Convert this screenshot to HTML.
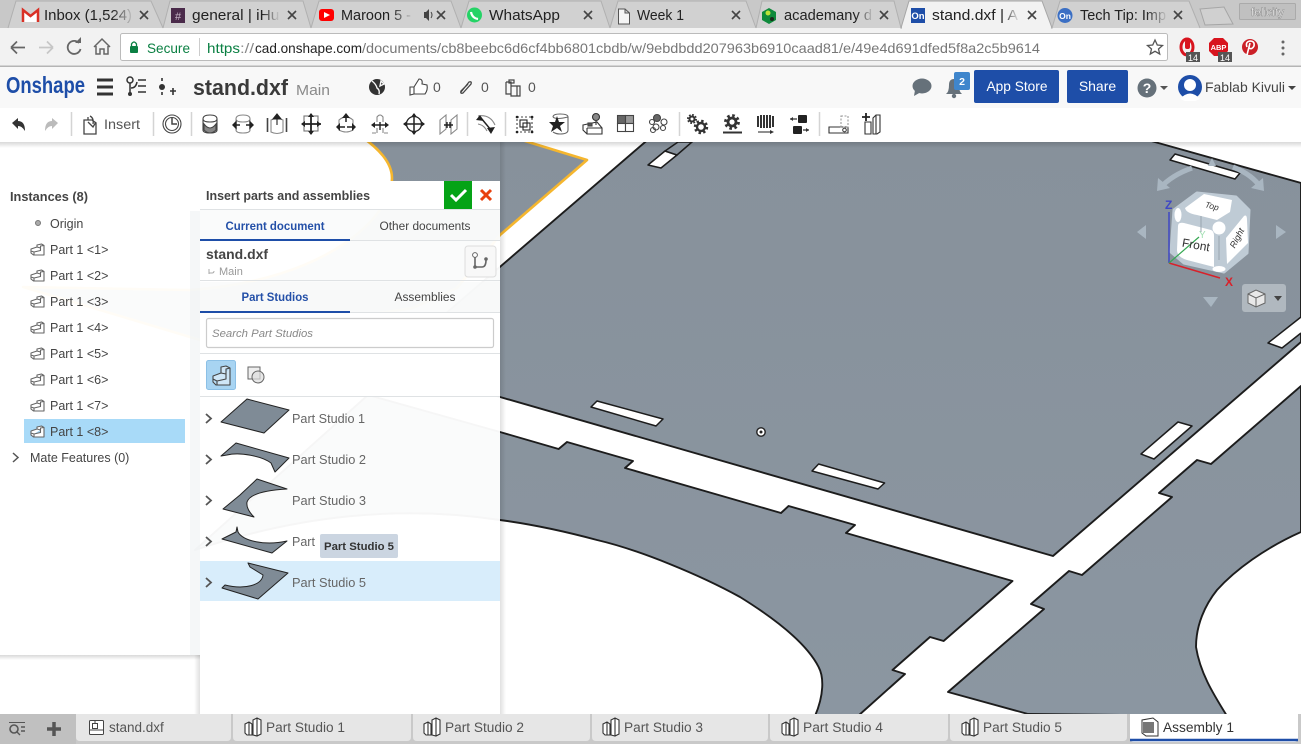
<!DOCTYPE html>
<html><head><meta charset="utf-8"><style>
html,body{margin:0;padding:0;width:1301px;height:744px;overflow:hidden;background:#fff}
svg{display:block;font-family:"Liberation Sans",sans-serif}
.tb{font-size:14.5px;fill:#222}
.ps{font-size:12.5px;fill:#666}
.inst{font-size:12.5px;fill:#444}
.btab{font-size:13.5px;fill:#555}
.pl{fill:url(#g);stroke:#1c1c1c;stroke-width:1.9;stroke-linejoin:round}
.slot{fill:#fff;stroke:#1c1c1c;stroke-width:1.5;stroke-linejoin:round}
.th{fill:#7f8b96;stroke:#222;stroke-width:1;stroke-linejoin:round}
.tab{fill:#d1d1d1;stroke:#b0b0b0;stroke-width:1}
.x{stroke:#444;stroke-width:1.6;fill:none}
.bt{fill:#e6e6e6}
</style></head><body>
<svg width="1301" height="744" viewBox="0 0 1301 744" xmlns="http://www.w3.org/2000/svg">
<defs>
<linearGradient id="g" gradientUnits="userSpaceOnUse" x1="0" y1="142" x2="0" y2="714"><stop offset="0" stop-color="#87919b"/><stop offset="1" stop-color="#8b96a1"/></linearGradient>
<linearGradient id="sh" x1="0" y1="0" x2="0" y2="1"><stop offset="0" stop-color="#000" stop-opacity=".15"/><stop offset="1" stop-color="#000" stop-opacity="0"/></linearGradient>
<linearGradient id="shx" x1="0" y1="0" x2="1" y2="0"><stop offset="0" stop-color="#000" stop-opacity=".12"/><stop offset="1" stop-color="#000" stop-opacity="0"/></linearGradient>
<linearGradient id="fd" x1="0" y1="0" x2="1" y2="0"><stop offset="0" stop-color="#d1d1d1" stop-opacity="0"/><stop offset="1" stop-color="#d1d1d1"/></linearGradient>
<linearGradient id="fa" x1="0" y1="0" x2="1" y2="0"><stop offset="0" stop-color="#f2f2f2" stop-opacity="0"/><stop offset="1" stop-color="#f2f2f2"/></linearGradient>
<g id="part"><path d="M-6.5,0 L-0.500,-2 L-0.500,-4 L4,-5 L6.500,-3.500 L6.500,6 L-4,6 L-6.500,4 Z M-6.500,2 L-3.500,3 L-3.500,6 M-3.500,3 L3,1.500 L3,-3 L6.500,-3.500 M-0.500,-2 L3,-1" fill="#fff" stroke="#666" stroke-width="1.100" stroke-linejoin="round"/></g>
<g id="ps"><path d="M-9,-3 L-5,-5 L-2,-3 L-2,8 L-7,8 L-9,6 Z M-5,-5 L-5,8 M-1,-7 L3,-9 L7,-7 L7,7 L3,9 L-1,8 Z M3,-9 L3,9" fill="#fff" stroke="#333" stroke-width="1.1"/></g>
</defs>

<!-- 3D viewport -->
<rect x="0" y="142" width="1301" height="572" fill="#fff"/>
<path d="M362,137 Q392,158 392,178 C392,215 330,280 190,290 L23,287 L200,340 L413,308 L457,288 L500,235 L587,160 L512,137 Z" fill="url(#g)" stroke="#f5b62e" stroke-width="2.600" stroke-linejoin="round"/>
<path class="pl" d="M651,137 L1137,137 L1301,183 L1301,342 L1053,556 L500,397 L387,364 Z"/>
<path class="pl" d="M368,395 L500,432 L558.6,449 L567,442 L633,461 L625,468 L781,513 L788.6,506 L855,525 L846,533 L1012.5,581 L943.6,641 L930,637 L892.5,670 L905,674 L858,716 L815,716 C824,695 824,677 818.6,667 C810,650 790,628 740,597 C700,575 640,550 597,540 C560,530 530,524 500,520 C400,505 300,515 195,550 Z"/>
<path class="pl" d="M1301,386 L1211,464 L1197,460 L1159,493 L1172,497 L1082,575 L1069,571 L1031,604 L1044,609 L948,692 L1028,714 L1227,716 C1212,692 1200,672 1196,647 C1196,625 1205,605 1217,590 C1235,570 1265,548 1301,532 Z"/>
<rect x="0" y="142" width="1301" height="6" fill="url(#sh)"/>
<path class="slot" d="M1175,154 L1240,173 L1235,179 L1170,160 Z"/>
<path class="slot" d="M597,401 L663,419 L656,426 L591,407 Z"/>
<path class="slot" d="M818.6,464 L884.6,483 L878,489 L812,471 Z"/>
<path class="slot" d="M1178,422 L1192,426 L1154,459 L1141,454 Z"/>
<path class="slot" d="M1301,317 L1268,343 L1282,348 L1301,333"/>
<path class="slot" d="M665,151 L677,155 L661,168 L648,165 Z"/>
<path d="M678,142 L692,142 L677,155 L665,151 Z" fill="#87919b" stroke="#1c1c1c" stroke-width="1.5"/>
<circle cx="761" cy="432" r="4.2" fill="#fff" stroke="#222" stroke-width="1.4"/><circle cx="761" cy="432" r="1.5" fill="#222"/>

<!-- View cube -->
<g>
<path d="M1160,188 Q1172,175 1192,168" fill="none" stroke="#a9b6c1" stroke-width="5"/><path d="M1157,191 L1158,178 L1170,188 Z" fill="#a9b6c1"/>
<path d="M1233,167 Q1253,175 1261,188" fill="none" stroke="#a9b6c1" stroke-width="5"/><path d="M1264,191 L1263,178 L1251,188 Z" fill="#a9b6c1"/>
<path d="M1208,166 L1212,158 L1216,166 Z" fill="#a9b6c1"/>
<path d="M1137,232 L1146,225 L1146,239 Z" fill="#a9b6c1"/><path d="M1286,232 L1276,225 L1276,239 Z" fill="#a9b6c1"/><path d="M1203,297 L1218,297 L1211,307 Z" fill="#a9b6c1"/>
<path d="M1174,210 L1197,193 L1236,197 L1249,210 L1247,253 L1224,272 L1184,263 L1171,252 Z" fill="#bfcbd5" stroke="#bfcbd5" stroke-width="3" stroke-linejoin="round"/>
<path d="M1185,208 L1204,194 L1232,200 L1230,212 L1217,220 L1197,215 Q1186,213 1185,208 Z" fill="#fff"/>
<path d="M1178,226 Q1178,222 1184,223 L1211,230 Q1214,231 1214,236 L1214,267 L1187,260 Q1177,257 1177,250 Z" fill="#fff"/>
<path d="M1226,238 L1244,216 Q1247,214 1247,220 L1248,243 L1227,264 Z" fill="#fff"/>
<circle cx="1219" cy="228" r="6.5" fill="#fff"/><ellipse cx="1178" cy="215" rx="3.5" ry="7" fill="#fff"/><ellipse cx="1219" cy="269" rx="6.5" ry="3" fill="#fff"/>
<path d="M1201,216 L1201,232 M1219,236 L1219,260" stroke="#9aa6b0" stroke-width="1"/>
<path d="M1169,263 L1169,212" stroke="#3f47c4" stroke-width="1.5"/><path d="M1169,263 L1220,278" stroke="#d8212a" stroke-width="1.5"/><path d="M1169,263 L1199,237" stroke="#35a852" stroke-width="1.2"/>
<text x="1196" y="249" font-size="12" fill="#333" transform="rotate(10 1196 245)" text-anchor="middle">Front</text>
<text x="1212" y="209" font-size="8.5" font-style="italic" fill="#333" transform="rotate(15 1212 206)" text-anchor="middle">Top</text>
<text x="1237" y="241" font-size="9" font-style="italic" fill="#333" transform="rotate(-62 1237 238)" text-anchor="middle">Right</text>
<text x="1165" y="209" font-size="12" font-weight="bold" fill="#3f47c4">Z</text>
<text x="1225" y="286" font-size="12" font-weight="bold" fill="#d8212a">X</text>
<text x="1199" y="238" font-size="10" fill="#a4e0b4">Y</text>
<rect x="1242" y="284" width="44" height="28" rx="3" fill="#b0b8bf"/>
<path d="M1248,294 L1256,290 L1265,294 L1265,303 L1256,307 L1248,303 Z" fill="#e8e8e8" stroke="#666"/><path d="M1248,294 L1256,298 L1265,294 M1256,298 L1256,307" fill="none" stroke="#666"/>
<path d="M1274,296 L1282,296 L1278,301 Z" fill="#444"/>
</g>

<!-- Left panel -->
<rect x="0" y="180" width="200" height="475" fill="#fff" fill-opacity=".96"/>
<rect x="190" y="211" width="10" height="444" fill="#eef1f3" fill-opacity=".6"/>
<rect x="0" y="655" width="200" height="5" fill="url(#sh)"/>
<text x="10" y="201" font-size="12.5" font-weight="bold" fill="#444" textLength="78" lengthAdjust="spacingAndGlyphs">Instances (8)</text>
<circle cx="38" cy="223" r="2.5" fill="#aaa" stroke="#777"/>
<text x="50" y="228" class="inst">Origin</text>
<rect x="24" y="419" width="161" height="24" fill="#a8daf8"/>
<use href="#part" x="37.500" y="249"/><text x="50" y="254" class="inst">Part 1 &lt;1&gt;</text>
<use href="#part" x="37.500" y="275"/><text x="50" y="280" class="inst">Part 1 &lt;2&gt;</text>
<use href="#part" x="37.500" y="301"/><text x="50" y="306" class="inst">Part 1 &lt;3&gt;</text>
<use href="#part" x="37.500" y="327"/><text x="50" y="332" class="inst">Part 1 &lt;4&gt;</text>
<use href="#part" x="37.500" y="353"/><text x="50" y="358" class="inst">Part 1 &lt;5&gt;</text>
<use href="#part" x="37.500" y="379"/><text x="50" y="384" class="inst">Part 1 &lt;6&gt;</text>
<use href="#part" x="37.500" y="405"/><text x="50" y="410" class="inst">Part 1 &lt;7&gt;</text>
<use href="#part" x="37.500" y="431"/><text x="50" y="436" class="inst">Part 1 &lt;8&gt;</text>
<path d="M13,453 L18,457.500 L13,462" fill="none" stroke="#555" stroke-width="1.5"/>
<text x="30" y="462" class="inst">Mate Features (0)</text>

<!-- Insert panel -->
<rect x="194" y="655" width="6" height="59" fill="url(#shx)" transform="matrix(-1 0 0 1 394 0)"/>
<rect x="500" y="142" width="6" height="572" fill="url(#shx)"/>
<rect x="200" y="181" width="300" height="533" fill="#fff" fill-opacity=".96"/>
<rect x="200" y="181" width="244" height="28" fill="#fff"/>
<rect x="350" y="181" width="150" height="28" fill="#fff"/>
<rect x="200" y="313" width="300" height="84" fill="#fff"/>
<rect x="444" y="181" width="28" height="28" fill="#05a316"/>
<path d="M451,195 L456,200 L466,190" fill="none" stroke="#fff" stroke-width="3"/>
<path d="M481,190 L491,200 M491,190 L481,200" stroke="#e8410e" stroke-width="3"/>
<text x="206" y="200" font-size="12.5" font-weight="bold" fill="#444" textLength="164" lengthAdjust="spacingAndGlyphs">Insert parts and assemblies</text>
<path d="M200,209.500 H500 M200,240.500 H500 M200,280.500 H500 M200,312.500 H500 M200,353.500 H500 M200,396.500 H500" stroke="#dfe2e4" stroke-width="1"/>
<rect x="200" y="210" width="300" height="30" fill="#f7f8f8" fill-opacity=".6"/>
<rect x="200" y="282" width="300" height="30" fill="#f7f8f8" fill-opacity=".6"/>
<text x="275" y="230" font-size="11.5" font-weight="bold" fill="#2450a8" text-anchor="middle" textLength="99" lengthAdjust="spacingAndGlyphs">Current document</text>
<text x="425" y="230" font-size="11.5" fill="#444" text-anchor="middle" textLength="91" lengthAdjust="spacingAndGlyphs">Other documents</text>
<rect x="200" y="239" width="150" height="2" fill="#1e4ea8"/>
<text x="206" y="259" font-size="14" font-weight="bold" fill="#444" textLength="62" lengthAdjust="spacingAndGlyphs">stand.dxf</text>
<path d="M209,269 v5 M209,273 h3 q2,0 2,-2" fill="none" stroke="#aaa"/><text x="219" y="275" font-size="11" fill="#999">Main</text>
<rect x="465" y="246" width="31" height="31" rx="3" fill="#f8f8f8" stroke="#ddd"/>
<circle cx="475" cy="255" r="2.4" fill="#fff" stroke="#666"/><path d="M475,257 V267 H482 Q486,267 486,260" fill="none" stroke="#666" stroke-width="1.6"/><circle cx="475" cy="267" r="1.8" fill="#666"/><circle cx="486" cy="259" r="1.8" fill="#666"/>
<text x="275" y="301" font-size="11.5" font-weight="bold" fill="#2450a8" text-anchor="middle" textLength="67" lengthAdjust="spacingAndGlyphs">Part Studios</text>
<text x="425" y="301" font-size="11.5" fill="#444" text-anchor="middle" textLength="61" lengthAdjust="spacingAndGlyphs">Assemblies</text>
<rect x="200" y="311" width="150" height="2" fill="#1e4ea8"/>
<rect x="206.500" y="318.500" width="287" height="29" rx="2" fill="#fff" stroke="#ccc" stroke-width="1.2"/>
<text x="212" y="337" font-size="11" font-style="italic" fill="#888" textLength="101" lengthAdjust="spacingAndGlyphs">Search Part Studios</text>
<rect x="206.500" y="360.500" width="29" height="29" rx="2" fill="#a8d4f2" stroke="#8cc0e6"/>
<path d="M213,379 L213,382 L216,385 L230,385 L230,368 L226,366 L221,367 L221,373 L213,376 Z M213,379 L217,381 L217,385 M217,381 L226,379 L226,369 L230,368 M221,373 L226,374" fill="#cfe6f7" stroke="#444" stroke-width="1.1" stroke-linejoin="round"/>
<rect x="248" y="367" width="12" height="12" fill="#eee" stroke="#666"/><circle cx="258" cy="377" r="6" fill="#ddd" fill-opacity=".7" stroke="#666"/>

<rect x="200" y="561" width="300" height="40" fill="#d8edfb"/>
<path d="M206,414 L211,418.500 L206,423 M206,455 L211,459.500 L206,464 M206,496 L211,500.500 L206,505 M206,537 L211,541.500 L206,546 M206,578 L211,582.500 L206,587" fill="none" stroke="#555" stroke-width="1.8"/>
<path class="th" d="M247,399 L289,410 L264,433 L221,422 Z"/>
<path class="th" d="M236,443 L289,458 L275,472 L271,463 C262,456 240,452 227,455 L221,456 Z"/>
<path class="th" d="M257,479 L287,489 C270,490 250,493 247,502 C246,508 250,513 254,517 L223,509 L240,495 Z"/>
<path class="th" d="M237,527 L238,532 C243,541 265,546 287,541 L272,553 L222,539 L236,532 Z"/>
<path class="th" d="M248,563 L288,573 L258,599 L222,588 L225,585 C245,590 262,585 263,575 L250,567 Z"/>
<text x="292" y="423" class="ps" textLength="73" lengthAdjust="spacingAndGlyphs">Part Studio 1</text>
<text x="292" y="464" class="ps" textLength="74" lengthAdjust="spacingAndGlyphs">Part Studio 2</text>
<text x="292" y="505" class="ps" textLength="74" lengthAdjust="spacingAndGlyphs">Part Studio 3</text>
<text x="292" y="546" class="ps">Part</text>
<text x="292" y="587" class="ps" textLength="74" lengthAdjust="spacingAndGlyphs">Part Studio 5</text>
<rect x="320" y="534" width="78" height="24" rx="2" fill="#cbd5e1"/>
<text x="324" y="550" font-size="11" font-weight="bold" fill="#333" textLength="70" lengthAdjust="spacingAndGlyphs">Part Studio 5</text>

<!-- Bottom tabs -->
<rect x="0" y="714" width="1301" height="30" fill="#c9c9c9"/>
<rect x="0" y="714" width="76" height="30" fill="#c0c0c0"/>
<path d="M9,722.500 H25" stroke="#555"/><circle cx="14" cy="729" r="4" fill="none" stroke="#555" stroke-width="1.6"/><path d="M17,732 L20,735 M21,727 H25 M21,731 H25" stroke="#555" stroke-width="1.4"/>
<path d="M47,729 H61 M54,722 V736" stroke="#555" stroke-width="3.5"/>
<path class="bt" d="M76,714 H231 V737 Q231,741 227,741 H80 Q76,741 76,737 Z"/>
<path class="bt" d="M233,714 H411 V737 Q411,741 407,741 H237 Q233,741 233,737 Z"/>
<path class="bt" d="M413,714 H590 V737 Q590,741 586,741 H417 Q413,741 413,737 Z"/>
<path class="bt" d="M592,714 H768 V737 Q768,741 764,741 H596 Q592,741 592,737 Z"/>
<path class="bt" d="M770,714 H948 V737 Q948,741 944,741 H774 Q770,741 770,737 Z"/>
<path class="bt" d="M950,714 H1127 V737 Q1127,741 1123,741 H954 Q950,741 950,737 Z"/>
<path fill="#fff" d="M1130,714 H1298 V738 Q1298,742 1294,742 H1134 Q1130,742 1130,738 Z"/>
<path d="M1130,740 H1298" stroke="#1e4ea8" stroke-width="2.4"/>
<rect x="89.500" y="720.500" width="14" height="14" rx="1" fill="#fff" stroke="#444"/><rect x="92.500" y="723.500" width="5" height="5" fill="#fff" stroke="#444"/><path d="M89,730 H103 M95,720 V723" stroke="#444"/>
<text x="109" y="732" class="btab">stand.dxf</text>
<use href="#ps" x="254" y="727"/><text x="266" y="732" class="btab" textLength="79" lengthAdjust="spacingAndGlyphs">Part Studio 1</text>
<use href="#ps" x="433" y="727"/><text x="445" y="732" class="btab" textLength="79" lengthAdjust="spacingAndGlyphs">Part Studio 2</text>
<use href="#ps" x="612" y="727"/><text x="624" y="732" class="btab" textLength="79" lengthAdjust="spacingAndGlyphs">Part Studio 3</text>
<use href="#ps" x="791" y="727"/><text x="803" y="732" class="btab" textLength="80" lengthAdjust="spacingAndGlyphs">Part Studio 4</text>
<use href="#ps" x="971" y="727"/><text x="983" y="732" class="btab" textLength="79" lengthAdjust="spacingAndGlyphs">Part Studio 5</text>
<path d="M1142,720 L1153,718 L1158,722 L1158,736 L1146,736 L1142,733 Z" fill="#fff" stroke="#333"/><rect x="1143" y="722" width="11" height="11" fill="#777"/>
<text x="1163" y="732" font-size="13.5" fill="#333" textLength="71" lengthAdjust="spacingAndGlyphs">Assembly 1</text>

<!-- Onshape header -->
<rect x="0" y="66" width="1301" height="42" fill="#f8f8f8"/>
<rect x="0" y="108" width="1301" height="34" fill="#fff"/>
<text x="6" y="93" font-size="23" font-weight="bold" fill="#1e4ea8" textLength="79" lengthAdjust="spacingAndGlyphs">Onshape</text>
<path d="M97,80 H113 M97,87 H113 M97,94 H113" stroke="#333" stroke-width="3"/>
<circle cx="130" cy="80" r="3" fill="none" stroke="#333" stroke-width="1.5"/><path d="M130,83 V93 M131,88 Q136,88 137,82 M138,80 H146 M138,86 H146 M138,92 H146" fill="none" stroke="#333" stroke-width="1.5"/><circle cx="130" cy="94" r="2" fill="#333"/>
<path d="M162,78 v3 M162,92 v3" stroke="#333" stroke-width="1.6"/><circle cx="162" cy="87" r="3" fill="#333"/><path d="M170,91 H176 M173,88 V95" stroke="#333" stroke-width="1.6"/>
<text x="193" y="95" font-size="22" font-weight="bold" fill="#3a3a3a" textLength="95" lengthAdjust="spacingAndGlyphs">stand.dxf</text>
<text x="296" y="95" font-size="15" fill="#8a8a8a" textLength="34" lengthAdjust="spacingAndGlyphs">Main</text>
<circle cx="377" cy="87" r="8" fill="#333"/><path d="M372,81 Q376,84 377,88 Q380,90 379,94 M381,81 L384,84 L380,86 Z" fill="none" stroke="#f8f8f8" stroke-width="1.4"/>
<path d="M410,87 H414 L419,79 Q423,79 422,84 L427,85 Q428,90 425,94 H414 L410,95 Z M414,87 V94" fill="#fff" stroke="#444" stroke-width="1.1"/>
<text x="433" y="92" font-size="14" fill="#555">0</text>
<path d="M461,92 L469,82 Q472,81 471,84 L463,93 Q460,94 461,91 L468,84" fill="none" stroke="#444" stroke-width="1.3"/>
<text x="481" y="92" font-size="14" fill="#555">0</text>
<path d="M506,82 H511 V96 H517 V86 H511 M506,82 V94 H511 M509,80 H514 V83 H509 Z M517,86 L520,86 V96 H517" fill="none" stroke="#444" stroke-width="1.2"/>
<text x="528" y="92" font-size="14" fill="#555">0</text>
<ellipse cx="922" cy="86" rx="9.500" ry="7.500" fill="#66717a"/><path d="M915,90 L914,96 L921,92 Z" fill="#66717a"/>
<path d="M946,94 Q949,92 949,85 Q949,79 954,79 Q959,79 959,85 Q959,92 962,94 Z" fill="#66717a"/><circle cx="954" cy="96" r="2.200" fill="#66717a"/>
<rect x="954" y="72" width="16" height="18" rx="2" fill="#3f86cc"/><text x="962" y="85" font-size="10.500" font-weight="bold" fill="#fff" text-anchor="middle">2</text>
<rect x="974" y="70" width="85" height="33" rx="2" fill="#1e4ea8"/><text x="1017" y="91" font-size="14" fill="#fff" text-anchor="middle" textLength="61" lengthAdjust="spacingAndGlyphs">App Store</text>
<rect x="1067" y="70" width="61" height="33" rx="2" fill="#1e4ea8"/><text x="1097.500" y="91" font-size="14" fill="#fff" text-anchor="middle">Share</text>
<circle cx="1147" cy="88" r="9.500" fill="#66717a"/><text x="1147" y="93" font-size="14" font-weight="bold" fill="#fff" text-anchor="middle">?</text>
<path d="M1160,86 H1168 L1164,90 Z" fill="#555"/>
<circle cx="1190" cy="87" r="12" fill="#1e4ea8"/><circle cx="1190" cy="85" r="6" fill="#fff"/><path d="M1180,99 Q1190,88 1200,99 L1195,101 H1185 Z" fill="#fff"/>
<text x="1205" y="92" font-size="13.500" fill="#444" textLength="80" lengthAdjust="spacingAndGlyphs">Fablab Kivuli</text>
<path d="M1288,86 H1296 L1292,90 Z" fill="#444"/>

<!-- Toolbar -->
<g fill="none" stroke="#444" stroke-width="1.1">
<path d="M71.500,112 V136 M153.500,112 V136 M191.500,112 V136 M467.500,112 V136 M505.500,112 V136 M679.500,112 V136 M819.500,112 V136" stroke="#d4d4d4" stroke-width="1.500"/>
<path d="M12,123 L18,118 V121 Q25,121 25,131 Q22,126 18,126 V129 Z" fill="#333" stroke="none"/>
<path d="M58,123 L52,118 V121 Q45,121 45,131 Q48,126 52,126 V129 Z" fill="#bbb" stroke="none"/>
<path d="M84,120 H92 L96,123 V134 H84 Z M88,120 L88,117 M90,116 Q94,118 93,124 M88,122 L93,127 L96,122" stroke-width="1.300"/>
<circle cx="172" cy="124" r="9"/><circle cx="172" cy="124" r="6.500"/><path d="M172,118 V124 H177" stroke-width="1.500"/>
<path d="M203,119 Q203,115 210,115 Q217,115 217,119 V130 Q217,133 210,133 Q203,133 203,130 Z M203,119 Q203,122 210,122 Q217,122 217,119"/><path d="M204,124 Q207,128 210,128 Q213,128 216,124 V130 Q213,133 210,133 Q207,133 204,130 Z" fill="#888"/>
<path d="M236,119 Q236,115 243,115 Q250,115 250,119 V130 Q250,133 243,133 Q236,133 236,130 Z M236,119 Q236,122 243,122 Q250,122 250,119" stroke="#888"/><path d="M234,125 H240 M246,125 H252 M233,125 L236,122 V128 Z M253,125 L250,122 V128 Z" fill="#222" stroke="#222" stroke-width="1.400"/>
<path d="M271,120 Q277,117 283,120 V132 Q277,135 271,132 Z" stroke="#888"/><path d="M267.500,118 V132 M286.500,118 V132" stroke-width="1.600"/><path d="M277,114 L273,119 H281 Z M277,119 V125" fill="#222" stroke="#222"/>
<rect x="304" y="116" width="14" height="15" stroke="#777"/><path d="M311,114 V134 M302,124 H321" stroke="#222" stroke-width="1.800"/><path d="M311,113 L308,117 H314 Z M311,135 L308,131 H314 Z M301,124 L305,121 V127 Z M321,124 L317,121 V127 Z" fill="#222" stroke="none"/>
<path d="M339,120 Q346,114 353,120 V130 Q346,134 339,130 Z" stroke="#888"/><path d="M346,113 L342,118 H350 Z M336,127 L340,123 V131 Z M356,127 L352,123 V131 Z" fill="#222" stroke="none"/><path d="M340,127 H345 M347,127 H352 M346,118 V122" stroke="#222" stroke-width="1.500"/>
<path d="M377,122 V117 Q380,113 383,117 V122 M376,133 H372 M384,133 H388 M377,128 V133 M383,128 V133" stroke="#888"/><path d="M371,125 L375,122 V128 Z M389,125 L385,122 V128 Z" fill="#222" stroke="none"/><path d="M375,125 H385 M380,122 V130" stroke="#222" stroke-width="1.400"/>
<circle cx="414" cy="124" r="7.500" stroke="#222" stroke-width="1.300"/><path d="M414,114 V134 M404,124 H424" stroke="#222" stroke-width="1.500"/><path d="M414,113 L411,117 H417 Z M414,135 L411,131 H417 Z M403,124 L407,121 V127 Z M425,124 L421,121 V127 Z" fill="#222" stroke="none"/>
<path d="M440,120 L446,115 V129 L440,134 Z M451,120 L457,115 V129 L451,134 Z" stroke="#888"/><path d="M444,125 H453 M447,122 L447,128 M450,122 L450,128" stroke="#222" stroke-width="1.400"/>
<path d="M478,116 Q490,114 495,125 M478,124 Q484,125 487,131" stroke="#888"/><path d="M480,115 L476,120 L484,121 Z M491,134 L487,128 L495,127 Z" fill="#222" stroke="none"/><path d="M481,118 L491,130" stroke="#222" stroke-width="1.500"/>
<rect x="517" y="117" width="15" height="15" stroke-dasharray="2 2"/><rect x="520" y="120" width="7" height="7" stroke="#222"/><rect x="523" y="123" width="7" height="7" stroke="#222"/><path d="M517,117 h.1 M532,117 h.1 M517,132 h.1 M532,132 h.1" stroke="#222" stroke-width="2.600" stroke-linecap="round"/>
<path d="M553,117 Q553,114 560,114 Q568,114 568,117 V130 Q568,134 560,134 Q556,134 553,132 M553,117 Q556,120 568,117" stroke="#666"/><path d="M557,116 L559,122 L565,122 L560,126 L562,132 L557,128 L551,132 L553,126 L549,122 L555,122 Z" fill="#222" stroke="none"/>
<path d="M583,125 L597,122 L602,128 V134 H587 L583,130 Z M587,128 L602,128 M587,128 V134" stroke="#333"/><circle cx="596" cy="117" r="3.500" fill="#888" stroke="#333"/><path d="M596,120 V125" stroke="#333"/><rect x="588" y="123" width="4" height="3" fill="#555"/>
<rect x="617.500" y="115.500" width="8" height="8" fill="#666"/><rect x="625.500" y="115.500" width="8" height="8" fill="#999"/><rect x="617.500" y="123.500" width="8" height="8" fill="#fff"/><rect x="625.500" y="123.500" width="8" height="8" fill="#fff"/>
<circle cx="657" cy="118" r="3.500" fill="#666"/><circle cx="652" cy="122" r="2.500"/><circle cx="664" cy="122" r="3"/><circle cx="656" cy="127" r="3"/><circle cx="663" cy="128" r="2.500"/><circle cx="653" cy="130" r="2.500"/>
<circle cx="701" cy="127" r="4" stroke="#333" stroke-width="2.400"/><circle cx="701" cy="127" r="6" stroke="#333" stroke-width="2.400" stroke-dasharray="2.400 2.310"/>
<circle cx="692" cy="119" r="2.500" stroke="#333" stroke-width="2"/><circle cx="692" cy="119" r="4" stroke="#333" stroke-width="2" stroke-dasharray="1.700 1.440"/>
<circle cx="732" cy="122" r="4" stroke="#333" stroke-width="2.800"/><circle cx="732" cy="122" r="6.500" stroke="#333" stroke-width="2.800" stroke-dasharray="2.600 2.500"/><path d="M723,132.500 H742" stroke="#333" stroke-width="2"/>
<path d="M758,116 V127 M761,115 V128 M764,115 V128 M767,115 V128 M770,115 V128 M773,116 V127" stroke="#333" stroke-width="2"/><path d="M758,132 H771" stroke="#333"/><path d="M774,132 L770,130 V134 Z" fill="#333" stroke="none"/>
<rect x="798" y="115" width="9" height="8" rx="1" fill="#222" stroke="none"/><rect x="793" y="126" width="9" height="8" rx="1" fill="#222" stroke="none"/><path d="M790,119 H797 M803,130 H809" stroke="#333" stroke-width="1.300"/><path d="M790,119 L793,117 V121 Z M809,130 L806,128 V132 Z" fill="#333" stroke="none"/>
<path d="M829,127 H848 V133 H829 Z" stroke="#333"/><path d="M841,116 H848 V127 H841 Z" stroke="#999" stroke-dasharray="2 1.500"/><circle cx="844.500" cy="130" r="1.800"/>
<path d="M865,122 H871 V134 H865 Z M873,118 L876,115 H880 V132 L877,134 H873 Z M876,115 V134" stroke="#333"/><path d="M862,117 H870 M866,113 V121" stroke="#222" stroke-width="1.800"/>
</g>
<text x="104" y="129" font-size="13.500" fill="#555" textLength="36" lengthAdjust="spacingAndGlyphs">Insert</text>

<!-- Chrome toolbar -->
<rect x="0" y="28" width="1301" height="38" fill="#f2f2f2"/>
<rect x="0" y="65.500" width="1301" height="1.500" fill="#b5b5b5"/>
<path d="M11,47.500 H25 M11,47.500 L17,41.500 M11,47.500 L17,53.500" fill="none" stroke="#666" stroke-width="1.700"/>
<path d="M39,47.500 H53 M53,47.500 L47,41.500 M53,47.500 L47,53.500" fill="none" stroke="#c6c6c6" stroke-width="1.700"/>
<path d="M79,43 A6.500,6.500 0 1 0 80.500,49" fill="none" stroke="#666" stroke-width="1.800"/><path d="M75,43 H81 V37 Z" fill="#666"/>
<path d="M94,47 L102,39 L110,47 M96,46 V54 H100 V49 H104 V54 H108 V46" fill="none" stroke="#666" stroke-width="1.500"/>
<rect x="120.500" y="33.500" width="1047" height="27" rx="2" fill="#fff" stroke="#bbb"/>
<rect x="130" y="46" width="8" height="7" rx="1" fill="#0b8043"/><path d="M131.500,46 V44 Q134,40 136.500,44 V46" fill="none" stroke="#0b8043" stroke-width="1.300"/>
<text x="147" y="53" font-size="14" fill="#0b8043" textLength="43" lengthAdjust="spacingAndGlyphs">Secure</text>
<path d="M199.500,38 V56" stroke="#ccc"/>
<text x="207" y="53" font-size="14" fill="#0b8043" textLength="33" lengthAdjust="spacingAndGlyphs">https</text>
<text x="240" y="53" font-size="14" fill="#888" textLength="14" lengthAdjust="spacingAndGlyphs">://</text>
<text x="255" y="53" font-size="14" fill="#222" textLength="107" lengthAdjust="spacingAndGlyphs">cad.onshape.com</text>
<text x="362" y="53" font-size="14" fill="#777" textLength="678" lengthAdjust="spacingAndGlyphs">/documents/cb8beebc6d6cf4bb6801cbdb/w/9ebdbdd207963b6910caad81/e/49e4d691dfed5f8a2c5b9614</text>
<path d="M1155,40 L1157.300,45 L1162.500,45.500 L1158.500,49 L1159.700,54 L1155,51.300 L1150.300,54 L1151.500,49 L1147.500,45.500 L1152.700,45 Z" fill="none" stroke="#555" stroke-width="1.300"/>
<ellipse cx="1187" cy="47" rx="6" ry="8" fill="none" stroke="#d8141e" stroke-width="3"/><rect x="1185" y="40" width="5" height="9" rx="2" fill="#d8141e"/>
<rect x="1186" y="52" width="14" height="10" fill="#555"/><text x="1193" y="61" font-size="9" fill="#fff" text-anchor="middle">14</text>
<path d="M1214,38 H1223 L1228,43 V51 L1223,56 H1214 L1209,51 V43 Z" fill="#d8141e"/><text x="1218.500" y="50" font-size="7.500" font-weight="bold" fill="#fff" text-anchor="middle">ABP</text>
<rect x="1218" y="52" width="14" height="10" fill="#555"/><text x="1225" y="61" font-size="9" fill="#fff" text-anchor="middle">14</text>
<circle cx="1250" cy="47" r="8" fill="#cb2027"/><path d="M1247,55 L1250,43 M1247,47 Q1245,42 1250,41 Q1255,41 1254,46 Q1252,50 1249,48" fill="none" stroke="#fff" stroke-width="1.600"/>
<circle cx="1283" cy="42" r="1.500" fill="#666"/><circle cx="1283" cy="48" r="1.500" fill="#666"/><circle cx="1283" cy="54" r="1.500" fill="#666"/>

<!-- Chrome tabs -->
<rect x="0" y="0" width="1301" height="28" fill="#c8c8c8"/>
<path class="tab" d="M8,28 L16,1 H151 L163,28"/>
<path class="tab" d="M163,28 L170,1 H303 L311,28"/>
<path class="tab" d="M311,28 L319,1 H451 L461,28"/>
<path class="tab" d="M461,28 L469,1 H601 L610,28"/>
<path class="tab" d="M610,28 L618,1 H746 L756,28"/>
<path class="tab" d="M756,28 L762,1 H894 L901,28"/>
<path class="tab" d="M1052,28 L1060,1 H1189 L1200,28"/>
<path d="M1200,9 L1224,7 L1233,24 L1205,25 Z" fill="#d0d0d0" stroke="#a6a6a6"/>
<rect x="1239.500" y="3.500" width="56" height="16" rx="1" fill="#c0c0c0" stroke="#aaa"/>
<text x="1267.500" y="16" font-size="12" fill="#fff" stroke="#555" stroke-width=".3" text-anchor="middle">felicity</text>

<text x="44" y="20" class="tb" textLength="88" lengthAdjust="spacingAndGlyphs">Inbox (1,524)</text><rect x="112" y="4" width="22" height="22" fill="url(#fd)"/>
<text x="192" y="20" class="tb" textLength="96" lengthAdjust="spacingAndGlyphs">general | iHub</text><rect x="262" y="4" width="18" height="22" fill="url(#fd)"/><rect x="280" y="4" width="8" height="22" fill="#d1d1d1"/>
<text x="341" y="20" class="tb" textLength="70" lengthAdjust="spacingAndGlyphs">Maroon 5 -</text><rect x="392" y="4" width="22" height="22" fill="url(#fd)"/>
<text x="489" y="20" class="tb" textLength="71" lengthAdjust="spacingAndGlyphs">WhatsApp</text>
<text x="637" y="20" class="tb" textLength="47" lengthAdjust="spacingAndGlyphs">Week 1</text>
<text x="784" y="20" class="tb" textLength="88" lengthAdjust="spacingAndGlyphs">academany d</text><rect x="856" y="4" width="18" height="22" fill="url(#fd)"/>
<text x="1080" y="20" class="tb" textLength="86" lengthAdjust="spacingAndGlyphs">Tech Tip: Imp</text><rect x="1146" y="4" width="22" height="22" fill="url(#fd)"/>

<path d="M901,28 L909,1 H1042 L1052,28 Z" fill="#f2f2f2" stroke="#a6a6a6"/>
<path d="M902,28 H1051" stroke="#f2f2f2" stroke-width="2"/>
<text x="932" y="20" class="tb" textLength="86" lengthAdjust="spacingAndGlyphs">stand.dxf | A</text><rect x="1002" y="4" width="18" height="22" fill="url(#fa)"/>

<path d="M23,22 V10 L30.500,16 L38,10 V22" fill="#fff" stroke="#d93025" stroke-width="2.500"/>
<rect x="171" y="8" width="14" height="15" fill="#4a2a4a"/><text x="178" y="20" font-size="11" fill="#c9b8c9" text-anchor="middle">#</text>
<rect x="319" y="9" width="15" height="12" rx="3" fill="#f00"/><path d="M324,12 L330,15 L324,18 Z" fill="#fff"/>
<path d="M424,12 H426 L429,9 V21 L426,18 H424 Z" fill="#444"/><path d="M431,12 Q433,15 431,18" fill="none" stroke="#444"/>
<circle cx="474.500" cy="15" r="7.500" fill="#25d366"/><path d="M471,12 Q472,18 478,19" fill="none" stroke="#fff" stroke-width="2.200"/>
<path d="M618.500,9 H625 L629.500,13 V24 H618.500 Z M625,9 V13 H629.500" fill="#f4f4f4" stroke="#555"/>
<path d="M769,8 L776,12 V20 L769,24 L762,20 V12 Z" fill="#0f8a3c"/><circle cx="768" cy="13" r="2.500" fill="#b9e33a"/><circle cx="772" cy="19" r="2" fill="#1b2a1b"/>
<rect x="911" y="8" width="14" height="15" fill="#1e4ea8"/><text x="918" y="19" font-size="9.500" font-weight="bold" fill="#fff" text-anchor="middle">On</text>
<circle cx="1065" cy="15.500" r="7.500" fill="#3b6fc4"/><text x="1065" y="19" font-size="8.500" font-weight="bold" fill="#fff" text-anchor="middle">On</text>

<path class="x" d="M140,11 L148,19 M148,11 L140,19"/>
<path class="x" d="M288,11 L296,19 M296,11 L288,19"/>
<path class="x" d="M437,11 L445,19 M445,11 L437,19"/>
<path class="x" d="M584,11 L592,19 M592,11 L584,19"/>
<path class="x" d="M732,11 L740,19 M740,11 L732,19"/>
<path class="x" d="M880,11 L888,19 M888,11 L880,19"/>
<path class="x" d="M1028,11 L1036,19 M1036,11 L1028,19"/>
<path class="x" d="M1174,11 L1182,19 M1182,11 L1174,19"/>
</svg>
</body></html>
